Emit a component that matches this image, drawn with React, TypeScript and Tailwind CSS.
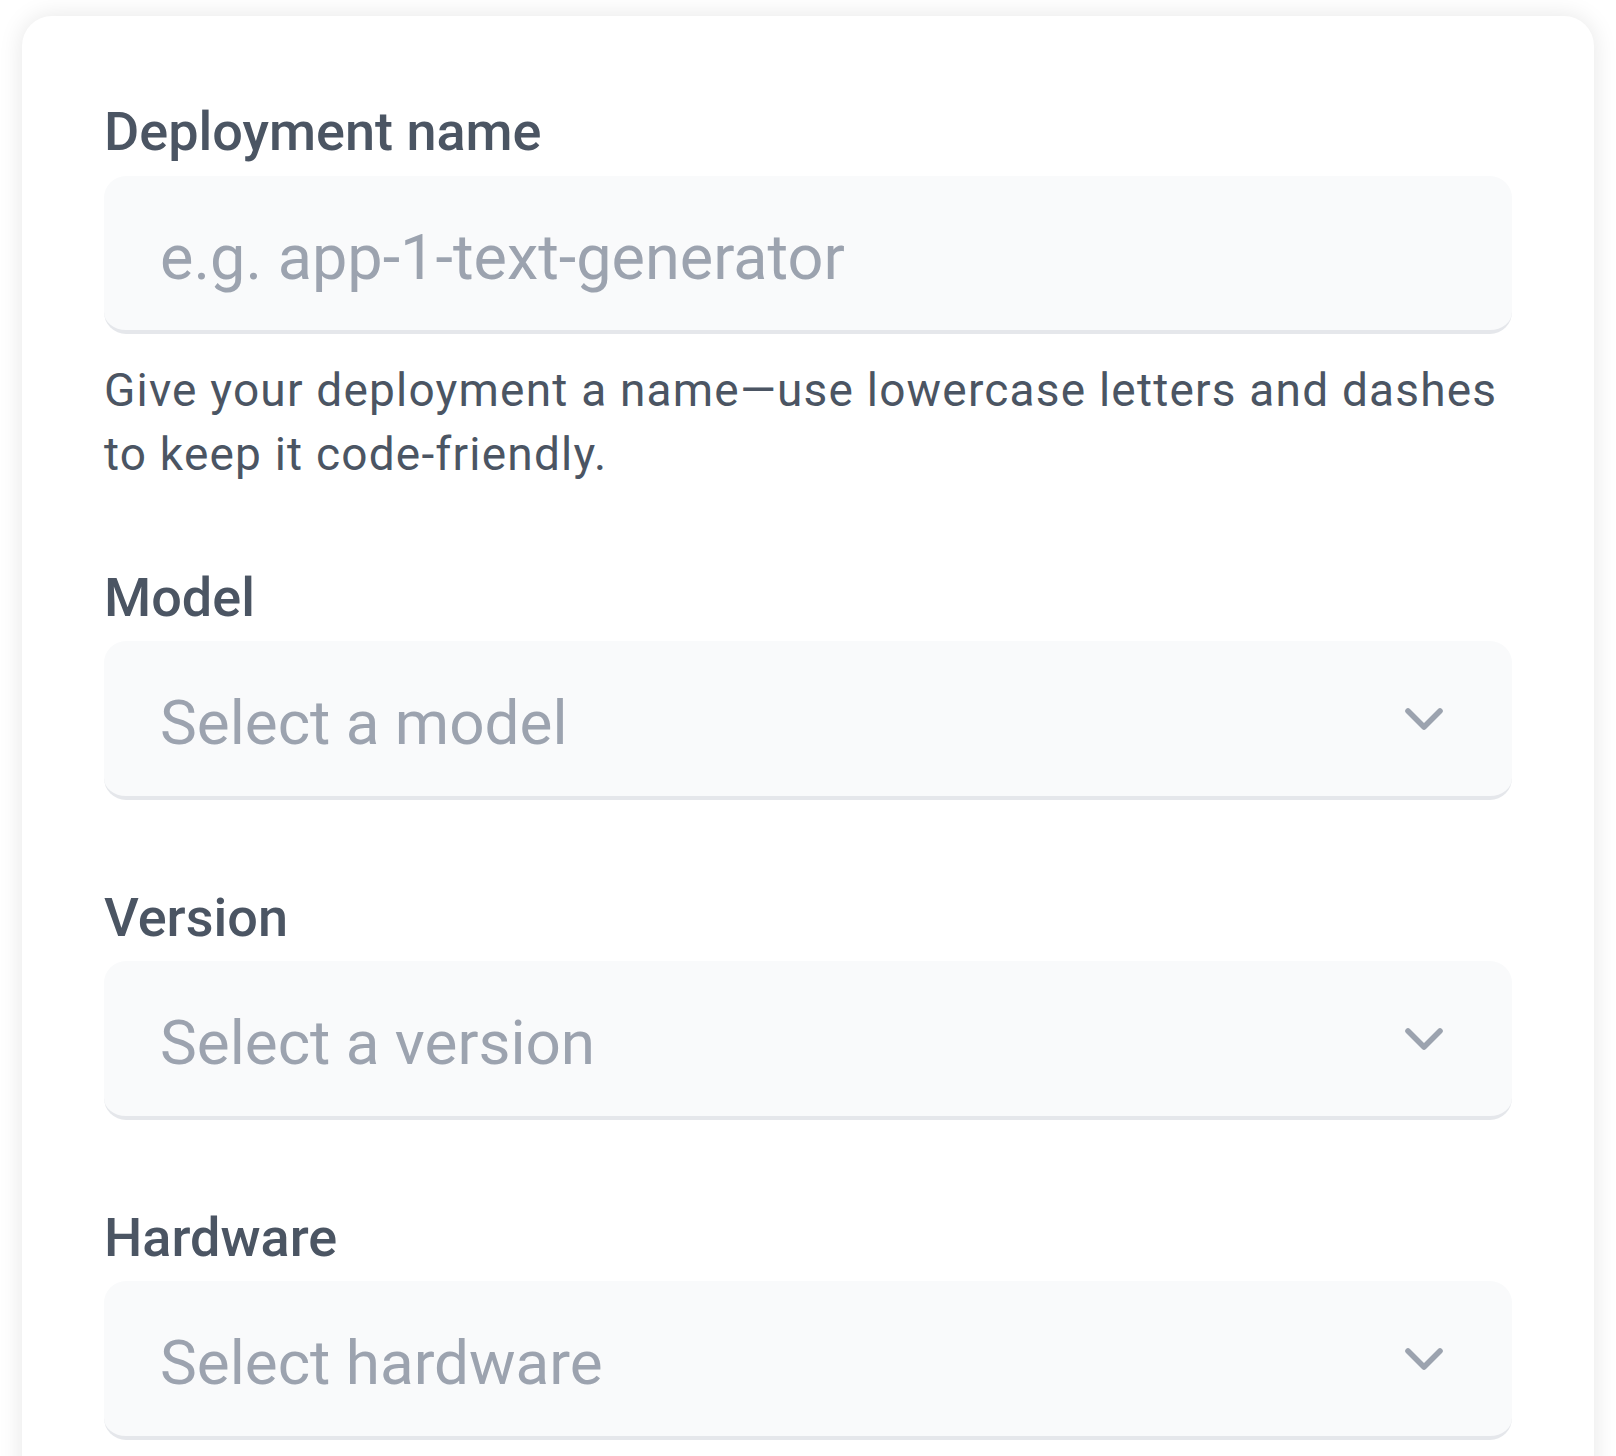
import React from 'react';
import { ChevronDown } from 'lucide-react';

const font = { fontFamily: 'Roboto, "Noto Sans", sans-serif' };

function Label({ children }: { children: React.ReactNode }) {
  return <label className="block text-[54px] leading-[72px] font-medium text-[#4b5563]">{children}</label>;
}

function SelectField({ label, placeholder }: { label: string; placeholder: string }) {
  return (
    <div>
      <Label>{label}</Label>
      <button className="mt-[7px] flex h-[159px] w-full items-center justify-between rounded-[22px] border-b-4 border-[#e5e7eb] bg-[#f9fafb] pl-[56px] pr-[56px] text-left">
        <span className="pt-[8px] text-[62px] font-normal text-[#9ca3af]">{placeholder}</span>
        <ChevronDown size={64} strokeWidth={2.1} className="text-[#9ca3af]" />
      </button>
    </div>
  );
}

export default function App() {
  return (
    <div className="min-h-screen bg-white px-[22px] pt-4" style={font}>
      {/* Form card */}
      <div className="rounded-[30px] bg-white px-[82px] pt-[80px] pb-[120px] shadow-[0_0_24px_rgba(0,0,0,0.1)]">
        <div>
          <Label>Deployment name</Label>
          <input
            className="mt-2 h-[158px] w-full rounded-[22px] border-b-4 border-[#e5e7eb] bg-[#f9fafb] px-[56px] pt-[8px] text-[63px] text-[#374151] outline-none placeholder:text-[#9ca3af]"
            placeholder="e.g. app-1-text-generator"
          />
          <p className="mt-6 text-[46px] leading-[64px] tracking-[1.2px] text-[#4b5563]">
            Give your deployment a name—use lowercase letters and dashes to keep it code-friendly.
          </p>
        </div>

        <div className="mt-[76px] flex flex-col gap-[82px]">
          <SelectField label="Model" placeholder="Select a model" />
          <SelectField label="Version" placeholder="Select a version" />
          <SelectField label="Hardware" placeholder="Select hardware" />
        </div>
      </div>
    </div>
  );
}
